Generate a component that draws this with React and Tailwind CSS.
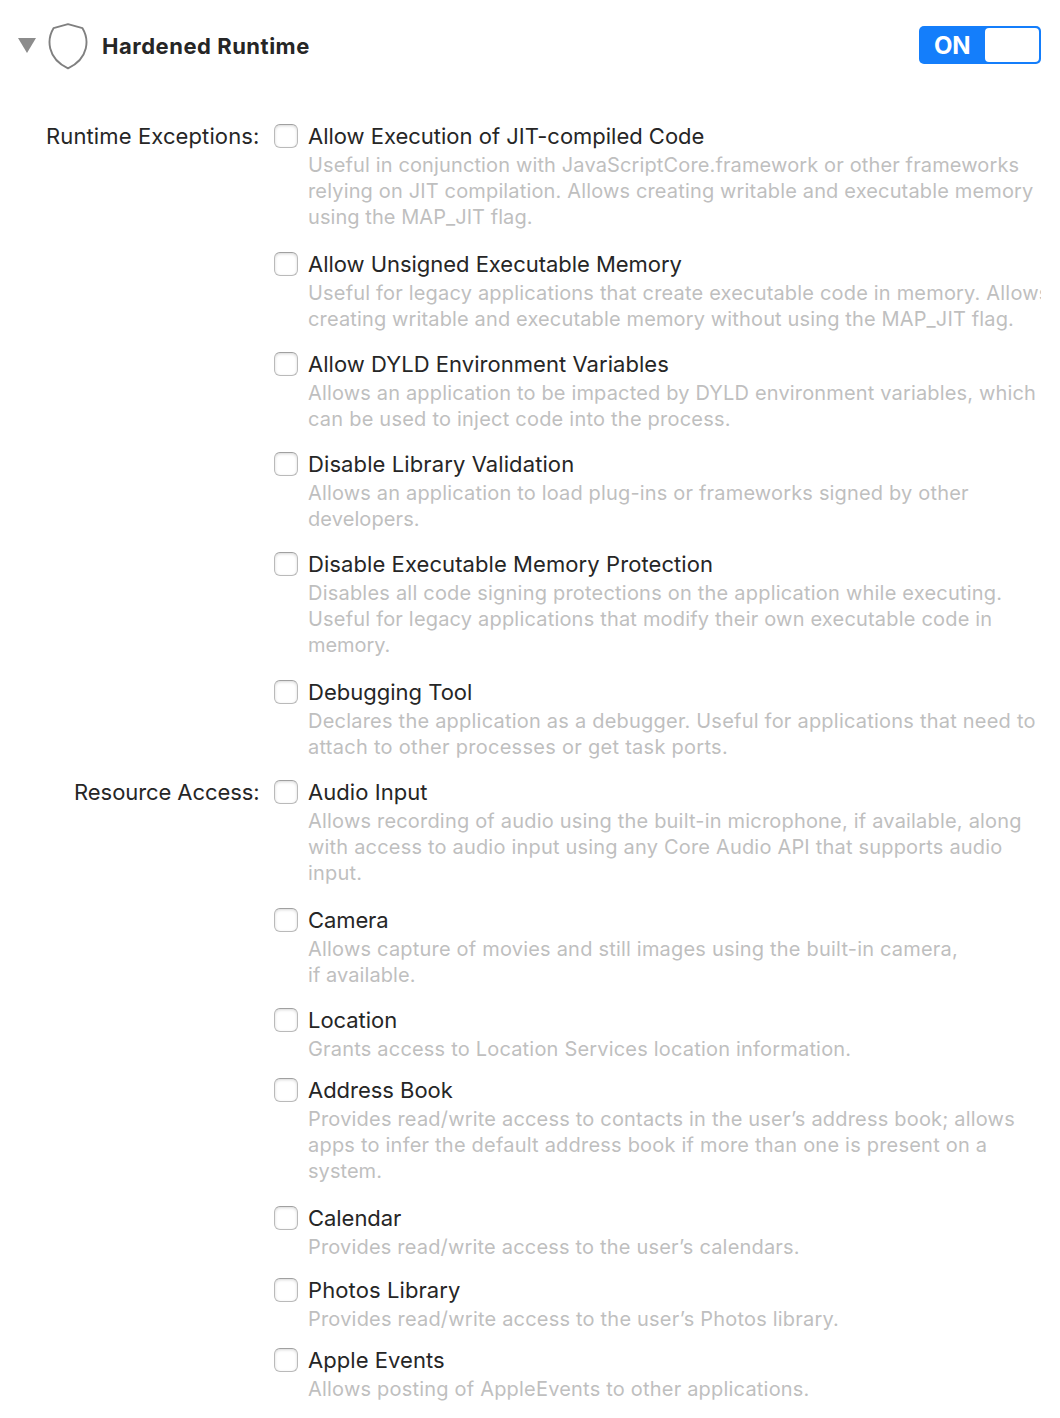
import React from "react";

const exceptions = [
  {
    title: "Allow Execution of JIT-compiled Code",
    track: "tracking-[-0.01px]",
    gap: "mb-[18px]",
    lines: [
      ["Useful in conjunction with JavaScriptCore.framework or other frameworks", "tracking-[0.13px]"],
      ["relying on JIT compilation. Allows creating writable and executable memory", "tracking-[0.15px]"],
      ["using the MAP_JIT flag.", "tracking-[0.06px]"],
    ],
  },
  {
    title: "Allow Unsigned Executable Memory",
    track: "tracking-[-0.03px]",
    gap: "mb-4",
    lines: [
      ["Useful for legacy applications that create executable code in memory. Allows", "tracking-[0.18px]"],
      ["creating writable and executable memory without using the MAP_JIT flag.", "tracking-[0.14px]"],
    ],
  },
  {
    title: "Allow DYLD Environment Variables",
    track: "tracking-[0.04px]",
    gap: "mb-4",
    lines: [
      ["Allows an application to be impacted by DYLD environment variables, which", "tracking-[0.16px]"],
      ["can be used to inject code into the process.", "tracking-[0.22px]"],
    ],
  },
  {
    title: "Disable Library Validation",
    track: "tracking-[0.1px]",
    gap: "mb-4",
    lines: [
      ["Allows an application to load plug-ins or frameworks signed by other", "tracking-[0.17px]"],
      ["developers.", "tracking-[0.1px]"],
    ],
  },
  {
    title: "Disable Executable Memory Protection",
    track: "tracking-[0.08px]",
    gap: "mb-[18px]",
    lines: [
      ["Disables all code signing protections on the application while executing.", "tracking-[0.21px]"],
      ["Useful for legacy applications that modify their own executable code in", "tracking-[0.19px]"],
      ["memory.", "tracking-[-0.05px]"],
    ],
  },
  {
    title: "Debugging Tool",
    track: "tracking-[0px]",
    gap: "mb-4",
    lines: [
      ["Declares the application as a debugger. Useful for applications that need to", "tracking-[0.22px]"],
      ["attach to other processes or get task ports.", "tracking-[0.28px]"],
    ],
  },
];

const resources = [
  {
    title: "Audio Input",
    track: "tracking-[0.06px]",
    gap: "mb-[18px]",
    lines: [
      ["Allows recording of audio using the built-in microphone, if available, along", "tracking-[0.19px]"],
      ["with access to audio input using any Core Audio API that supports audio", "tracking-[0.19px]"],
      ["input.", "tracking-[0.2px]"],
    ],
  },
  {
    title: "Camera",
    track: "tracking-[-0.1px]",
    gap: "mb-4",
    lines: [
      ["Allows capture of movies and still images using the built-in camera,", "tracking-[0.2px]"],
      ["if available.", "tracking-[0.07px]"],
    ],
  },
  {
    title: "Location",
    track: "tracking-[-0.05px]",
    gap: "mb-3",
    lines: [["Grants access to Location Services location information.", "tracking-[0.19px]"]],
  },
  {
    title: "Address Book",
    track: "tracking-[-0.03px]",
    gap: "mb-[18px]",
    lines: [
      ["Provides read/write access to contacts in the user’s address book; allows", "tracking-[0.19px]"],
      ["apps to infer the default address book if more than one is present on a", "tracking-[0.21px]"],
      ["system.", "tracking-[0.05px]"],
    ],
  },
  {
    title: "Calendar",
    track: "tracking-[-0.05px]",
    gap: "mb-3.5",
    lines: [["Provides read/write access to the user’s calendars.", "tracking-[0.18px]"]],
  },
  {
    title: "Photos Library",
    track: "tracking-[0.1px]",
    gap: "mb-3",
    lines: [["Provides read/write access to the user’s Photos library.", "tracking-[0.2px]"]],
  },
  {
    title: "Apple Events",
    track: "tracking-[0.05px]",
    gap: "",
    lines: [["Allows posting of AppleEvents to other applications.", "tracking-[0.2px]"]],
  },
];

function Option({ title, track, gap, lines }) {
  return (
    <div className={`flex ${gap}`}>
      <span className="mt-1 mr-2.5 size-6 shrink-0 rounded-[6px] border border-[#bababa] border-t-[#a0a0a0] bg-white shadow-[inset_0_1px_3px_rgba(0,0,0,0.16)]" />
      <div className="min-w-0 flex-1">
        <div className={`h-8 text-[22px] leading-8 whitespace-nowrap text-[#262626] ${track}`}>{title}</div>
        {lines.map(([text, spacing]) => (
          <div key={text} className={`h-[26px] text-[20px] leading-[26px] whitespace-nowrap text-[#bfbfbf] ${spacing}`}>
            {text}
          </div>
        ))}
      </div>
    </div>
  );
}

function Section({ label, track, items }) {
  return (
    <section className="flex">
      <div className={`w-[260px] shrink-0 pr-[0.5px] text-right text-[22px] leading-8 text-[#262626] ${track}`}>{label}</div>
      <div className="ml-3.5 min-w-0 flex-1 overflow-hidden">
        {items.map((item) => (
          <Option key={item.title} {...item} />
        ))}
      </div>
    </section>
  );
}

export default function App() {
  return (
    <main className="h-[1418px] w-[1060px] overflow-hidden bg-white pr-[19px] font-['Inter',sans-serif]">
      <header className="flex h-[120px] items-start pt-[22px] pl-[18px]">
        <svg width="18" height="16" viewBox="0 0 18 16" className="mt-4">
          <path d="M0 0H18L9 15Z" fill="#8c8c8c" />
        </svg>
        <svg width="42" height="48" viewBox="0 0 42 48" className="ml-[11px]" fill="none" stroke="#808080" strokeWidth="1.9" strokeLinejoin="round">
          <path d="M21 2.2L35.5 6.2C42 17 42.5 36 21 46.3C-.5 36 0 17 6.5 6.2Z" />
        </svg>
        <h1 className="ml-[13px] h-12 text-[22px] leading-[48px] font-bold tracking-[0.52px] text-[#262626]">Hardened Runtime</h1>
        <div className="mt-1 ml-auto flex h-[38px] w-[122px] justify-between rounded-[5px] bg-[#147efb] p-[2px]">
          <span className="ml-[13px] text-[24px] leading-[36px] font-bold tracking-[-0.3px] text-white">ON</span>
          <span className="h-[34px] w-[54px] rounded-[4px] bg-white" />
        </div>
      </header>
      <Section label="Runtime Exceptions:" track="tracking-[0.12px]" items={exceptions} />
      <Section label="Resource Access:" track="tracking-[-0.08px]" items={resources} />
    </main>
  );
}
